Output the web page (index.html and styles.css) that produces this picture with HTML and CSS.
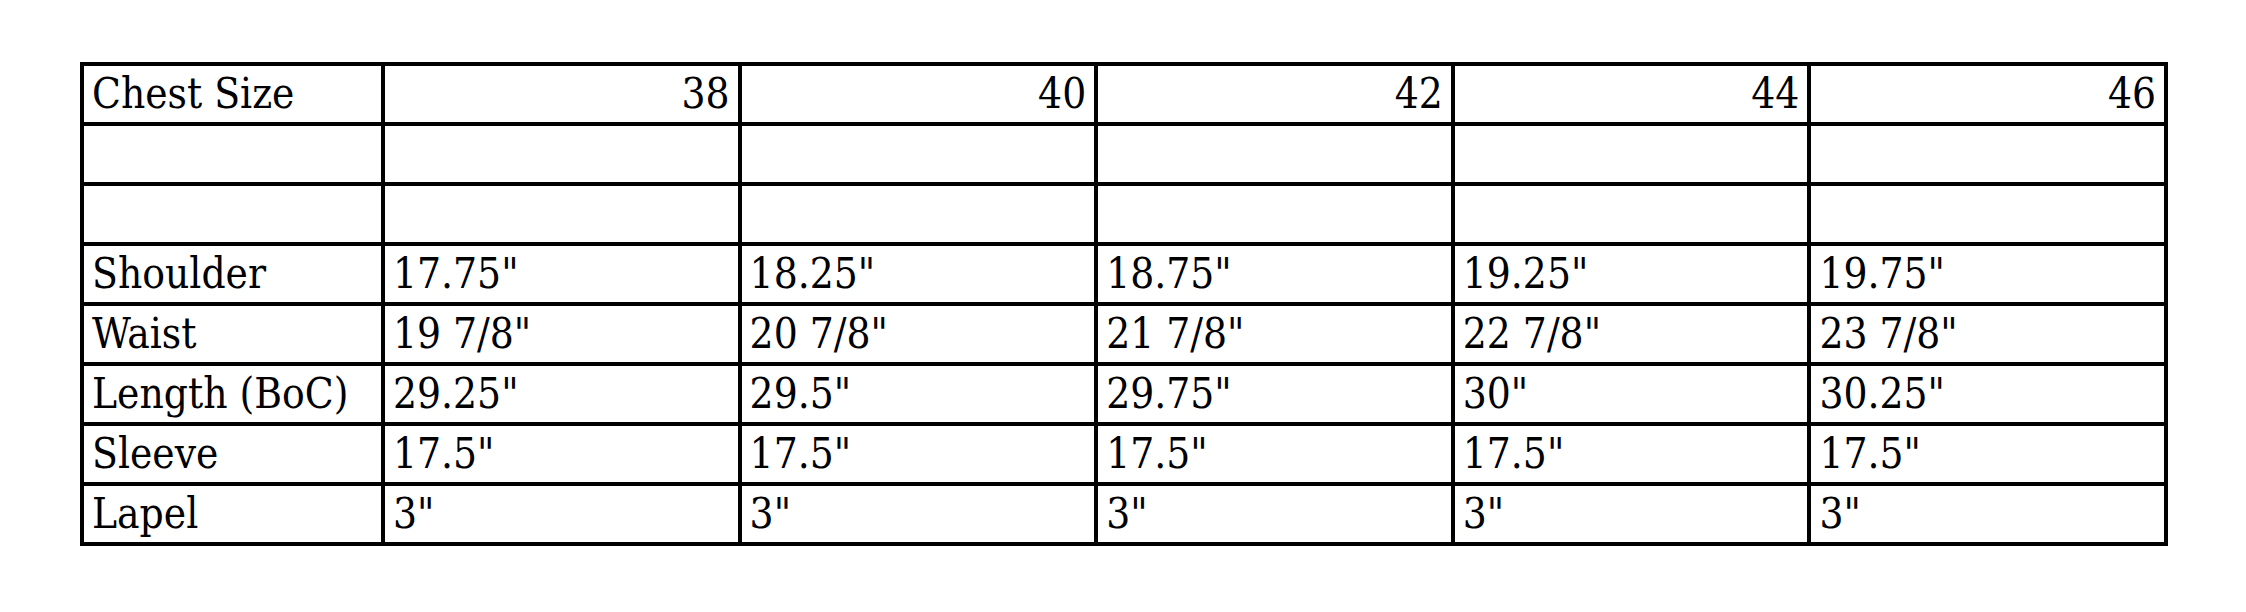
FILE: index.html
```html
<!DOCTYPE html>
<html>
<head>
<meta charset="utf-8">
<link rel="stylesheet" href="styles.css">
</head>
<body>
<div class="page">
<table class="sizes">
  <colgroup>
    <col class="c-label"><col class="c-val"><col class="c-val"><col class="c-val"><col class="c-val"><col class="c-val">
  </colgroup>
  <tr><td>Chest Size</td><td class="num">38</td><td class="num">40</td><td class="num">42</td><td class="num">44</td><td class="num">46</td></tr>
  <tr><td></td><td></td><td></td><td></td><td></td><td></td></tr>
  <tr><td></td><td></td><td></td><td></td><td></td><td></td></tr>
  <tr><td>Shoulder</td><td>17.75"</td><td>18.25"</td><td>18.75"</td><td>19.25"</td><td>19.75"</td></tr>
  <tr><td>Waist</td><td>19 7/8"</td><td>20 7/8"</td><td>21 7/8"</td><td>22 7/8"</td><td>23 7/8"</td></tr>
  <tr><td>Length (BoC)</td><td>29.25"</td><td>29.5"</td><td>29.75"</td><td>30"</td><td>30.25"</td></tr>
  <tr><td>Sleeve</td><td>17.5"</td><td>17.5"</td><td>17.5"</td><td>17.5"</td><td>17.5"</td></tr>
  <tr><td>Lapel</td><td>3"</td><td>3"</td><td>3"</td><td>3"</td><td>3"</td></tr>
</table>
</div>
</body>
</html>
```
FILE: styles.css
```css
html, body {
  margin: 0;
  padding: 0;
  background: #fff;
}
.page {
  padding: 62px 0 0 80px;
}
.sizes {
  border-collapse: collapse;
  table-layout: fixed;
  width: 2084px;
  font-family: "DejaVu Serif Condensed", "Liberation Serif", serif;
  font-stretch: condensed;
  font-size: 42px;
  color: #000;
}
.c-label { width: 301px; }
.c-val { width: 356.6px; }
.sizes td {
  border: 4px solid #000;
  height: 60px;
  padding: 0 8px 6px 8px;
  box-sizing: border-box;
  vertical-align: bottom;
  line-height: 44px;
  white-space: nowrap;
  text-align: left;
}
.sizes td.num {
  text-align: right;
}
```
